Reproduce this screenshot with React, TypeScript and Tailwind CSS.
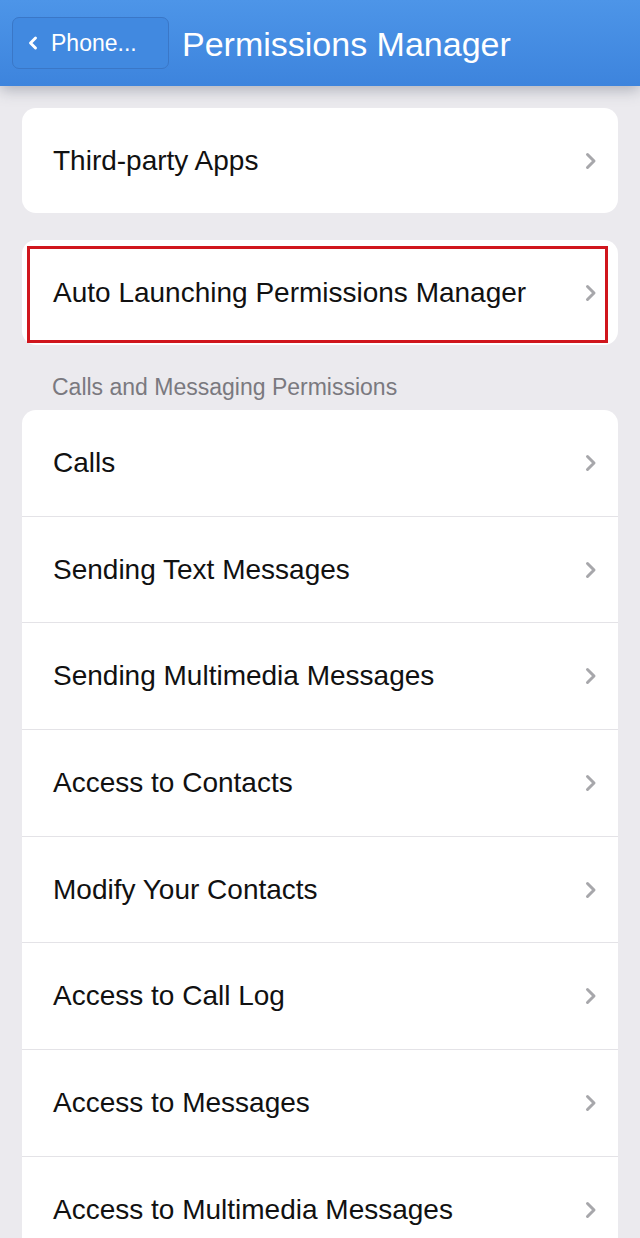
import { ChevronRight } from 'lucide-react'

const permissions = [
  'Calls',
  'Sending Text Messages',
  'Sending Multimedia Messages',
  'Access to Contacts',
  'Modify Your Contacts',
  'Access to Call Log',
  'Access to Messages',
  'Access to Multimedia Messages'
]

function Chevron() {
  return (
    <svg width="12" height="18" viewBox="0 0 12 18" className="shrink-0">
      <path d="M2.5 2.5 L9 9 L2.5 15.5" fill="none" stroke="#a7a7ab" strokeWidth="3" strokeLinecap="round" strokeLinejoin="round" />
    </svg>
  )
}

function Row({ label, divider, short }: { label: string; divider?: boolean; short?: boolean }) {
  return (
    <div
      className={`flex items-center justify-between pl-[31px] pr-[21px] ${short ? 'h-[105px]' : 'h-[106.7px]'} ${divider ? 'border-b border-[#e4e3e7]' : ''}`}
    >
      <span className="text-[28px] text-[#111]">{label}</span>
      <Chevron />
    </div>
  )
}

export default function App() {
  return (
    <div className="h-[1238px] w-[640px] overflow-hidden bg-[#ebeaee] font-['Liberation_Sans',Arial,sans-serif]">
      <header className="relative z-10 flex h-[86px] items-center gap-[13px] bg-gradient-to-b from-[#4d95e8] to-[#3d84dd] pl-[12px] shadow-[0_4px_14px_rgba(60,70,90,0.35)]">
        <button className="flex h-[52px] w-[157px] items-center gap-[8px] rounded-[7px] border border-[#3a77c7] bg-[#4189e0] pl-[10px] text-white">
          <ChevronRight className="size-[20px] rotate-180" strokeWidth={3.5} />
          <span className="text-[23px] font-medium">Phone...</span>
        </button>
        <h1 className="pt-[3px] text-[34px] text-white">Permissions Manager</h1>
      </header>

      <main className="px-[22px] pt-[22px]">
        <div className="rounded-[14px] bg-white">
          <Row label="Third-party Apps" short />
        </div>

        <div className="relative mt-[27px] rounded-[14px] bg-white">
          <Row label="Auto Launching Permissions Manager" short />
          <div className="pointer-events-none absolute bottom-[2px] left-[5px] right-[10px] top-[6px] border-[3px] border-[#d0161d]" />
        </div>

        <p className="mb-[10px] mt-[29px] pl-[30px] text-[23px] leading-[26px] text-[#7a797f]">Calls and Messaging Permissions</p>

        <div className="rounded-t-[14px] bg-white">
          {permissions.map((p, i) => (
            <Row key={p} label={p} divider={i < permissions.length - 1} />
          ))}
        </div>
      </main>
    </div>
  )
}
